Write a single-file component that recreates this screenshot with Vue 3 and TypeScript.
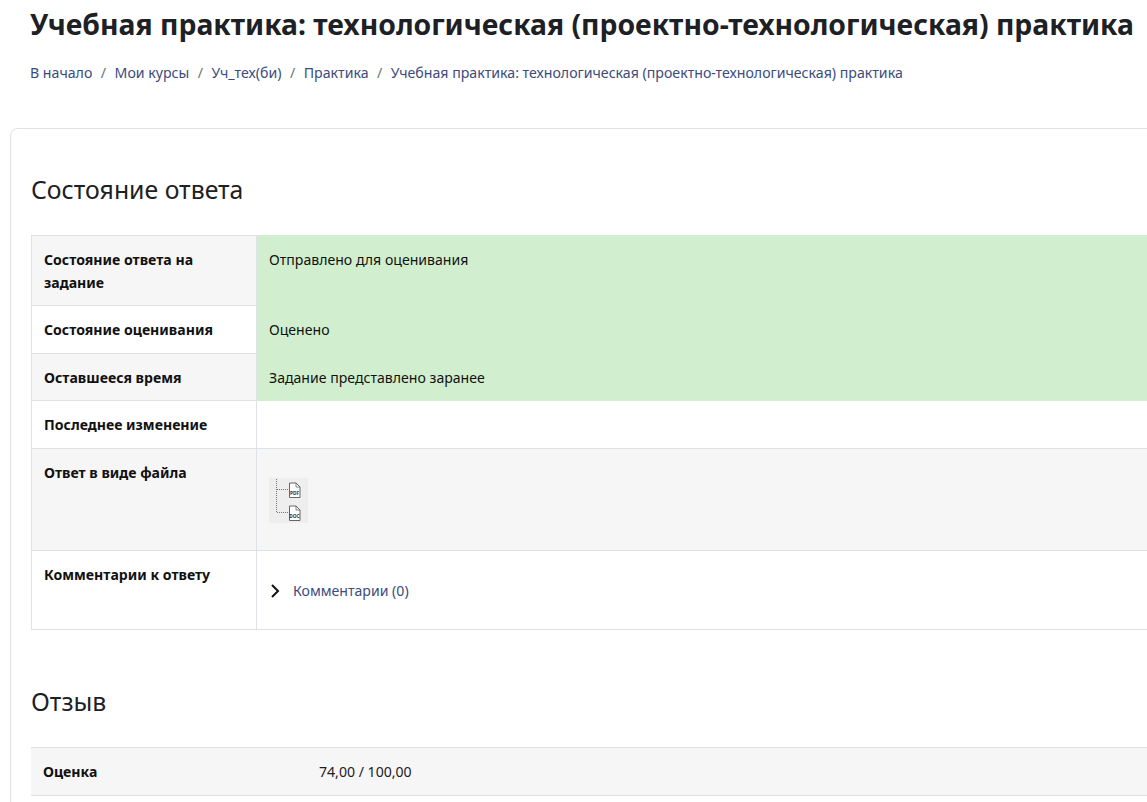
<script setup lang="ts">
interface Crumb {
  label: string
}

const crumbs: Crumb[] = [
  { label: 'В начало' },
  { label: 'Мои курсы' },
  { label: 'Уч_тех(би)' },
  { label: 'Практика' },
  { label: 'Учебная практика: технологическая (проектно-технологическая) практика' }
]
</script>

<template>
  <div class="page">
    <header class="page-head">
      <h1>Учебная практика: технологическая (проектно-технологическая) практика</h1>
      <nav class="crumbs">
        <template v-for="(c, i) in crumbs" :key="c.label">
          <span v-if="i > 0" class="sep">/</span>
          <a>{{ c.label }}</a>
        </template>
      </nav>
    </header>

    <main class="card">
      <h2 class="first">Состояние ответа</h2>
      <table class="status">
        <tbody>
          <tr class="odd">
            <th>Состояние ответа на задание</th>
            <td class="ok">Отправлено для оценивания</td>
          </tr>
          <tr>
            <th>Состояние оценивания</th>
            <td class="ok">Оценено</td>
          </tr>
          <tr class="odd">
            <th>Оставшееся время</th>
            <td class="ok">Задание представлено заранее</td>
          </tr>
          <tr>
            <th>Последнее изменение</th>
            <td></td>
          </tr>
          <tr class="odd">
            <th>Ответ в виде файла</th>
            <td class="files">
              <svg class="tree" width="39" height="45" viewBox="0 0 39 45">
                <rect width="39" height="45" fill="#eeeeee" />
                <path d="M7.5 1V34M8 11.5H20M8 34.5H20" stroke="#777" stroke-width="1" stroke-dasharray="1 1" fill="none" />
                <g fill="#fff" stroke="#555" stroke-width="0.9">
                  <path d="M20.5 5H27L31 9V19.5H20.5Z" />
                  <path d="M20.5 28H27L31 32V42.5H20.5Z" />
                </g>
                <path d="M27 5V9H31M27 28V32H31" fill="none" stroke="#555" stroke-width="0.7" />
                <text x="25.5" y="16.5" class="ext">PDF</text>
                <text x="25.5" y="39.5" class="ext">DOC</text>
              </svg>
            </td>
          </tr>
          <tr>
            <th>Комментарии к ответу</th>
            <td class="comments">
              <svg class="chev" width="10" height="14" viewBox="0 0 10 14">
                <path d="M2 1L8 7L2 13" fill="none" stroke="#111" stroke-width="2" />
              </svg>
              <a>Комментарии (0)</a>
            </td>
          </tr>
        </tbody>
      </table>

      <h2 class="second">Отзыв</h2>
      <table class="feedback">
        <tbody>
          <tr class="odd">
            <th>Оценка</th>
            <td>74,00 / 100,00</td>
          </tr>
          <tr>
            <th>&nbsp;</th>
            <td></td>
          </tr>
        </tbody>
      </table>
    </main>
  </div>
</template>

<style>
html,
body {
  overflow: hidden;
  background: #fff;
}
</style>

<style scoped>
.page {
  width: 1147px;
  height: 802px;
  overflow: hidden;
  font-family: 'Noto Sans', 'Open Sans', sans-serif;
  font-size: 14.1px;
  line-height: 22.5px;
  color: #1d2125;
}

.page-head {
  padding: 0 0 0 30px;
  height: 128px;
  box-sizing: border-box;
}

h1 {
  margin: 0;
  padding-top: 6px;
  font-size: 28.35px;
  line-height: 37px;
  font-weight: 700;
  white-space: nowrap;
}

.crumbs {
  margin-top: 19px;
  display: flex;
  white-space: nowrap;
  font-size: 14.15px;
  color: #3b4b7c;
}

.sep {
  padding: 0 8.5px;
  color: #6a737b;
}

.card {
  margin-left: 10px;
  width: 1300px;
  padding: 0 20px;
  border: 1px solid #dee2e6;
  border-radius: 8px;
  height: 800px;
}

h2 {
  margin: 0;
  font-size: 24.8px;
  font-weight: 400;
  line-height: 30px;
}

.first {
  padding-top: 45px;
  padding-bottom: 31px;
}

.second {
  padding-top: 56px;
  padding-bottom: 31px;
}

table {
  border-collapse: collapse;
  width: 1280px;
  table-layout: fixed;
}

.status th,
.status td {
  border: 1px solid #dee2e6;
  padding: 13px 12px 11px;
  vertical-align: top;
  text-align: left;
}

th {
  font-weight: 700;
  color: #111;
}

.status th {
  width: 200px;
}

.odd th,
.odd td {
  background: #f6f6f6;
}

.status td.ok {
  background: #d1efcf;
  border-color: #d1efcf;
  color: #111;
}

.status td.files {
  padding-top: 29px;
  padding-bottom: 27px;
}

.tree {
  display: block;
}

.ext {
  font-size: 4.8px;
  font-weight: 700;
  fill: #333;
  text-anchor: middle;
}

.status td.comments {
  padding-top: 29px;
  padding-bottom: 27px;
}

.chev {
  vertical-align: -2px;
  margin-left: 1px;
  margin-right: 13px;
}

.comments a {
  color: #3b4b7c;
}

.feedback th,
.feedback td {
  border-top: 1px solid #dee2e6;
  border-bottom: 1px solid #dee2e6;
  padding: 13px 12px 11px;
  text-align: left;
}

.feedback th {
  width: 252px;
}
</style>
